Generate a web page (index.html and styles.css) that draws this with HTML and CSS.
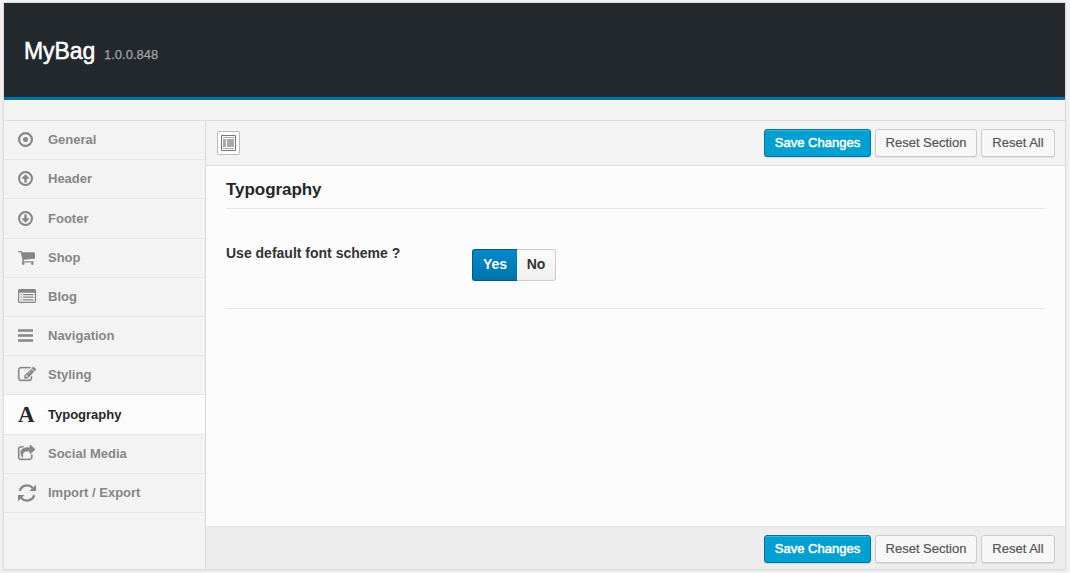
FILE: index.html
```html
<!DOCTYPE html>
<html lang="en">
<head>
<meta charset="utf-8">
<title>MyBag Options</title>
<link rel="stylesheet" href="styles.css">
</head>
<body>
<div class="panel">
  <header class="header"><h1 class="brand">MyBag</h1><span class="version">1.0.0.848</span></header>
  <div class="strip"></div>
  <div class="body">
    <nav class="sidebar">
      <a class="item"><span class="icon"><svg width="15" height="15" viewBox="0 0 1536 1536"><circle cx="768" cy="768" r="656" fill="none" stroke="currentColor" stroke-width="224"/><circle cx="768" cy="768" r="256"/></svg></span><span class="label">General</span></a>
      <a class="item"><span class="icon"><svg width="15" height="15" viewBox="0 0 1536 1536"><circle cx="768" cy="768" r="662" fill="none" stroke="currentColor" stroke-width="212"/><path d="M768 330L1120 690V790H896V1190H640V790H416V690Z"/></svg></span><span class="label">Header</span></a>
      <a class="item tall"><span class="icon"><svg width="15" height="15" viewBox="0 0 1536 1536"><circle cx="768" cy="768" r="662" fill="none" stroke="currentColor" stroke-width="212"/><path d="M768 1206L1120 846V746H896V346H640V746H416V846Z"/></svg></span><span class="label">Footer</span></a>
      <a class="item"><span class="icon"><svg width="17" height="14" viewBox="64 256 1664 1408" preserveAspectRatio="none"><path d="M704 1536q0 52-38 90t-90 38-90-38-38-90 38-90 90-38 90 38 38 90zm896 0q0 52-38 90t-90 38-90-38-38-90 38-90 90-38 90 38 38 90zm128-1088v512q0 24-16.500 42.500t-40.500 21.500l-1044 122q13 60 13 70 0 16-24 64h920q26 0 45 19t19 45-19 45-45 19h-1024q-26 0-45-19t-19-45q0-11 8-31.500t16-36 21.500-40 15.500-29.500l-177-823h-204q-26 0-45-19t-19-45 19-45 45-19h256q16 0 28.500 6.500t19.500 15.500 13 24.500 8 26 5.500 29.500 4.500 26h1201q26 0 45 19t19 45z"/></svg></span><span class="label">Shop</span></a>
      <a class="item"><span class="icon"><svg class="up" width="18" height="14" viewBox="0 0 18 14"><path fill-rule="evenodd" d="M1.500 0H16.500Q18 0 18 1.500V12.500Q18 14 16.500 14H1.500Q0 14 0 12.500V1.500Q0 0 1.500 0ZM1.200 3.700V12.300Q1.200 12.800 1.700 12.800H16.300Q16.800 12.800 16.800 12.300V3.700Z"/><path d="M2.600 5h1.200v1.200H2.600zM5 5h10.400v1.200H5zM2.600 7.600h1.200v1.200H2.600zM5 7.600h10.400v1.200H5zM2.600 10.200h1.200v1.200H2.600zM5 10.200h10.400v1.200H5z"/></svg></span><span class="label">Blog</span></a>
      <a class="item"><span class="icon"><svg width="15" height="13" viewBox="0 0 15 13"><path d="M0 .3h15v2.400H0zM0 5.300h15v2.400H0zM0 10.300h15v2.400H0z"/></svg></span><span class="label">Navigation</span></a>
      <a class="item"><span class="icon"><svg class="up bold" width="18" height="14" viewBox="0 128 1792 1408"><path d="M888 1184l116-116-152-152-116 116v56h96v96h56zm440-720q-16-16-33 1l-350 350q-17 17-1 33t33-1l350-350q17-17 1-33zm80 594v190q0 119-84.500 203.500t-203.500 84.500h-832q-119 0-203.500-84.500t-84.500-203.500v-832q0-119 84.500-203.500t203.500-84.500h832q63 0 117 25 15 7 18 23 3 17-9 29l-49 49q-14 14-32 8-23-6-45-6h-832q-66 0-113 47t-47 113v832q0 66 47 113t113 47h832q66 0 113-47t47-113v-126q0-13 9-22l64-64q15-15 35-7t20 29zm-96-738l288 288-672 672h-288v-288zm444 132l-92 92-288-288 92-92q28-28 68-28t68 28l152 152q28 28 28 68t-28 68z"/></svg></span><span class="label">Styling</span></a>
      <a class="item tall active"><span class="icon letter">A</span><span class="label">Typography</span></a>
      <a class="item"><span class="icon"><svg class="up bold" width="17" height="15" viewBox="64 0 1664 1536" preserveAspectRatio="none"><path d="M1472 989v259q0 119-84.500 203.500t-203.500 84.500h-832q-119 0-203.500-84.500t-84.500-203.500v-832q0-119 84.500-203.500t203.500-84.500h255q13 0 22.500 9.500t9.500 22.500q0 27-26 32-77 26-133 60-10 4-16 4h-112q-66 0-113 47t-47 113v832q0 66 47 113t113 47h832q66 0 113-47t47-113v-214q0-19 18-29 28-13 54-37 16-16 35-8 21 9 21 29zm237-496l-384 384q-18 19-45 19-12 0-25-5-39-17-39-59v-192h-160q-323 0-438 131-119 137-74 473 3 23-20 34-8 2-12 2-16 0-26-13-10-14-21-31t-39.500-68.500-49.500-99.500-38.500-114-17.500-122q0-49 3.500-91t14-90 28-88 47-81.500 68.500-74 94.500-61.500 124.500-48.500 159.500-30.500 196.500-11h160v-192q0-42 39-59 13-5 25-5 26 0 45 19l384 384q19 19 19 45t-19 45z"/></svg></span><span class="label">Social Media</span></a>
      <a class="item"><span class="icon"><svg width="18" height="18" viewBox="0 0 18 18"><path d="M1.800 6.800A7.500 7.500 0 0 1 14.700 4M16.200 11.200A7.500 7.500 0 0 1 3.300 14" fill="none" stroke="currentColor" stroke-width="2.400"/><path d="M18 .8V7H11.400ZM0 17.200V11H6.600Z"/></svg></span><span class="label">Import / Export</span></a>
    </nav>
    <main class="main">
      <div class="toolbar">
        <button class="expand" aria-label="Expand"><svg width="15" height="16" viewBox="0 0 15 16"><path d="M.5.5h14v15H.5z" fill="#fff" stroke="#777"/><path d="M2 2h11v1H2zM2 4h3v8H2zM6 4h7v8H6zM2 13h11v1H2z" fill="#aaa"/></svg></button>
        <div class="actions"><button class="btn primary">Save Changes</button><button class="btn section">Reset Section</button><button class="btn all">Reset All</button></div>
      </div>
      <section class="content">
        <h2 class="title">Typography</h2>
        <div class="field">
          <div class="question">Use default font scheme ?</div>
          <div class="switch"><span class="yes">Yes</span><span class="no">No</span></div>
        </div>
      </section>
      <div class="toolbar bottom">
        <div class="actions"><button class="btn primary">Save Changes</button><button class="btn section">Reset Section</button><button class="btn all">Reset All</button></div>
      </div>
    </main>
  </div>
</div>
</body>
</html>
```
FILE: styles.css
```css
* { box-sizing: border-box; }
body {
  margin: 0;
  padding: 2px 4px 0 3px;
  height: 573px;
  overflow: hidden;
  background: #f1f1f1;
  font-family: "Liberation Sans", Arial, sans-serif;
  font-size: 13px;
}
.panel {
  display: flex;
  flex-direction: column;
  height: 568px;
  border: 1px solid #dcdcdc;
  background: #f3f3f3;
  box-shadow: 0 1px 3px rgba(0, 0, 0, .06);
}
.header {
  display: flex;
  align-items: baseline;
  flex: none;
  height: 97px;
  padding: 34px 20px 0;
  border-bottom: 3px solid #0073aa;
  background: #23282d;
}
.brand {
  width: 72px;
  margin: 0 8px 0 0;
  color: #fff;
  font-size: 23px;
  font-weight: 400;
  line-height: 28px;
  letter-spacing: -.1px;
  -webkit-text-stroke: .5px #fff;
}
.version { color: #a0a3a5; font-size: 13px; -webkit-text-stroke: .25px #a0a3a5; }
.strip { flex: none; height: 21px; border-bottom: 1px solid #dcdcdc; border-top: 1px solid #fbfbfb; }
.body { display: flex; flex: 1; min-height: 0; }
.sidebar { width: 202px; border-right: 1px solid #d8d8d8; }
.item {
  display: flex;
  align-items: center;
  height: 39px;
  padding: 0 0 1px 14px;
  border-bottom: 1px solid #e7e7e7;
  color: #868686;
}
.tall { height: 40px; }
.active { background: #fcfcfc; color: #23282d; }
.icon { display: flex; align-items: center; width: 30px; height: 20px; }
.icon svg { display: block; fill: currentColor; }
.icon .up { margin-bottom: 2px; }
.icon .bold { overflow: visible; stroke: currentColor; stroke-width: 30; }
.letter { padding-top: 2px; font: bold 23px/20px "Liberation Serif", serif; }
.label { font-size: 13px; font-weight: 700; white-space: nowrap; }
.main { display: flex; flex: 1; flex-direction: column; background: #fcfcfc; }
.toolbar {
  display: flex;
  justify-content: space-between;
  flex: none;
  height: 45px;
  padding: 8px 10px 0 11px;
  border-bottom: 1px solid #dedede;
  background: #f3f3f3;
}
.bottom { justify-content: flex-end; height: 43px; border-top: 1px solid #e4e4e4; border-bottom: 0; background: #ededed; }
.expand {
  display: flex;
  align-items: center;
  justify-content: center;
  width: 23px;
  height: 24px;
  margin: 2px 0 0;
  padding: 0;
  border: 1px solid #bbb;
  border-radius: 2px;
  background: #fff;
}
.actions { display: flex; gap: 4px; }
.btn {
  height: 28px;
  padding: 0 0 1px;
  border: 1px solid #ccc;
  border-radius: 3px;
  background: #f7f7f7;
  box-shadow: 0 1px 0 rgba(0, 0, 0, .08);
  color: #555;
  font: 13px "Liberation Sans", Arial, sans-serif;
  white-space: nowrap;
  -webkit-text-stroke: .2px #555;
}
.primary {
  width: 107px;
  border-color: #0073aa;
  background: #00a0d2;
  box-shadow: inset 0 1px 0 rgba(120, 200, 230, .5), 0 1px 0 rgba(0, 0, 0, .1);
  color: #fff;
  -webkit-text-stroke: .5px #fff;
}
.section { width: 102px; }
.all { width: 74px; }
.content { flex: 1; padding: 0 20px; }
.title {
  height: 43px;
  margin: 0;
  padding-top: 14px;
  border-bottom: 1px solid #e5e5e5;
  color: #23282d;
  font-size: 17px;
  line-height: 20px;
  letter-spacing: -.05px;
}
.field { display: flex; height: 100px; border-bottom: 1px solid #e5e5e5; }
.question { width: 246px; padding-top: 36px; color: #333; font-size: 14px; font-weight: 700; line-height: 16px; }
.switch { display: flex; height: 32px; margin-top: 40px; font-size: 14px; font-weight: 700; line-height: 29px; text-align: center; }
.yes {
  width: 45px;
  border: 1px solid #005a87;
  border-right: 0;
  border-radius: 3px 0 0 3px;
  background: linear-gradient(#0089cc, #0073aa);
  color: #fff;
}
.no { width: 39px; border: 1px solid #ccc; border-left: 0; border-radius: 0 3px 3px 0; background: linear-gradient(#fbfbfb, #f0f0f0); color: #333; }
```
